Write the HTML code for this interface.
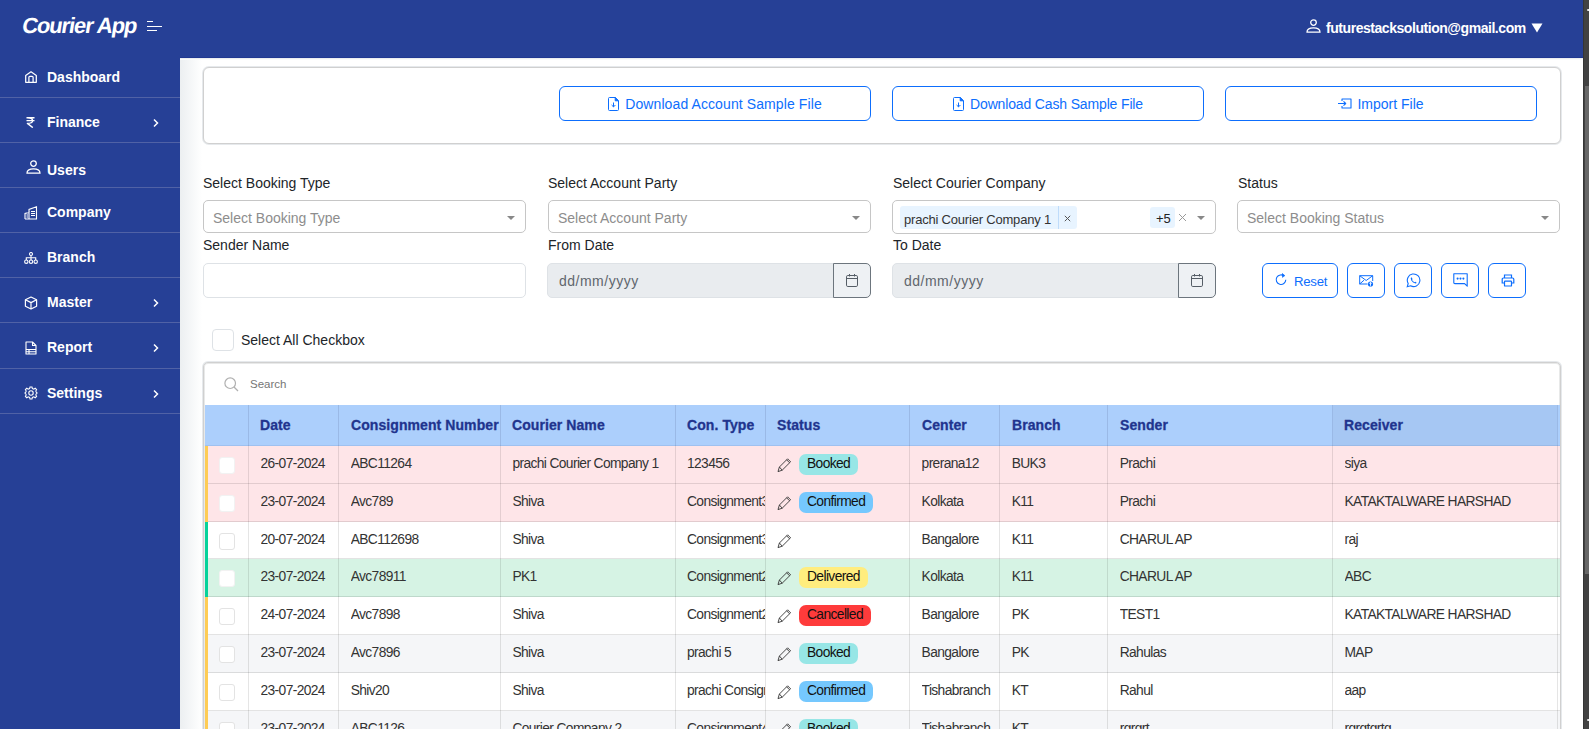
<!DOCTYPE html><html><head><meta charset="utf-8"><style>
*{box-sizing:border-box;margin:0;padding:0}
html,body{width:1589px;height:729px;overflow:hidden;background:#fff;font-family:"Liberation Sans",sans-serif;}
.a{position:absolute}
#hdr{left:0;top:0;width:1583px;height:58px;background:#264096;}
#side{left:0;top:58px;width:180px;height:671px;background:#264096;}
#shade{left:180px;top:58px;width:22px;height:671px;background:linear-gradient(to right,#eceff1,#ffffff);}
#shadetop{left:180px;top:58px;width:1403px;height:2px;background:linear-gradient(to bottom,#e3e6ea,#ffffff);}
.sep{position:absolute;left:0;width:180px;height:1px;background:#5062a6}
.nav{position:absolute;left:47px;color:#fff;font-weight:bold;font-size:14px;line-height:16px;white-space:nowrap}
.ic{position:absolute}
#sb{left:1583px;top:0;width:6px;height:729px;background:#424242;border-left:1px solid #363636}
#thumb{left:1585px;top:86px;width:4px;height:488px;background:#686868}
.card{position:absolute;border:1px solid #d0d0d0;border-radius:6px;background:#fff;box-shadow:0 0 0 1px #e6e9ec}
.btn{position:absolute;border:1px solid #0d6efd;border-radius:6px;color:#0d6efd;font-size:14px;display:flex;align-items:center;justify-content:center;background:#fff;white-space:nowrap}
.lbl{position:absolute;font-size:14px;line-height:16px;color:#212529;white-space:nowrap}
.sel{position:absolute;height:33px;border:1px solid #c6c6c6;border-radius:5px;background:#fff}
.ph{position:absolute;font-size:14px;line-height:16px;color:#8d8d8d;white-space:nowrap}
.arr{position:absolute;width:0;height:0;border-left:4px solid transparent;border-right:4px solid transparent;border-top:4px solid #888}
.inp{position:absolute;height:35px;border:1px solid #dee2e6;border-radius:5px;background:#fff}
.dinp{position:absolute;height:35px;border:1px solid #dee2e6;border-radius:5px 0 0 5px;background:#e9ecef}
.dbtn{position:absolute;height:35px;width:38px;border:1px solid #6c757d;border-radius:0 5px 5px 0;background:#eef1f4}
.dtxt{position:absolute;font-size:14px;line-height:16px;color:#5f666d;letter-spacing:0.5px;white-space:nowrap}
.ibtn{position:absolute;top:263px;height:35px;border:1px solid #0d6efd;border-radius:6px;background:#fff}
.th{position:absolute;top:405px;height:41px;font-weight:bold;font-size:14px;color:#21348e;letter-spacing:0.08px;-webkit-text-stroke:0.3px #21348e;white-space:nowrap}
.row{position:absolute;left:205px;width:1355px;height:38px;border-bottom:1px solid rgba(0,0,0,0.11)}
.cell{position:absolute;font-size:13.8px;letter-spacing:-0.62px;color:#333;white-space:nowrap;overflow:hidden;line-height:16px}
.vd{position:absolute;width:1px;background:rgba(0,0,0,0.1)}
.hvd{position:absolute;width:1px;top:405px;height:41px;background:rgba(0,0,40,0.1)}
.badge{position:absolute;height:21px;border-radius:7px;font-size:13.8px;letter-spacing:-0.6px;color:#111;line-height:19px;padding:0 8px;white-space:nowrap}
.cb{position:absolute;width:16px;height:17px;border-radius:3px;background:#fff}
</style></head><body><div id="hdr" class="a"></div>
<div id="side" class="a"></div>
<div id="shade" class="a"></div>
<div id="shadetop" class="a"></div>
<div class="a" style="left:180px;top:57px;width:1403px;height:1px;background:#1f3790"></div>
<div class="a" style="left:21px;top:14px;font-size:22px;font-weight:bold;color:#fff;letter-spacing:-1.1px;line-height:24px;transform:skewX(-9deg);transform-origin:0 20px">Courier App</div>
<div class="a" style="left:147px;top:21px;width:6px;height:1px;background:#fff"></div><div class="a" style="left:147px;top:26px;width:15px;height:1px;background:#fff"></div><div class="a" style="left:147px;top:30px;width:10px;height:1px;background:#fff"></div>
<svg class="a" style="left:1306px;top:19px" width="15" height="14" viewBox="0 0 15 14" fill="none" stroke="#fff" stroke-width="1.3"><circle cx="7.5" cy="3.6" r="2.8"/><path d="M1 13.2 Q1 8.8 7.5 8.8 Q14 8.8 14 13.2 Z"/></svg>
<div class="a" style="left:1326px;top:20px;font-size:14px;font-weight:bold;color:#fff;line-height:16px;letter-spacing:-0.45px;white-space:nowrap">futurestacksolution@gmail.com</div>
<svg class="a" style="left:1531px;top:23px" width="12" height="10" viewBox="0 0 12 10"><path d="M0.5 0.5H11.5L6 9.5Z" fill="#fff"/></svg>
<div class="sep" style="top:97px"></div>
<div class="sep" style="top:142px"></div>
<div class="sep" style="top:187px"></div>
<div class="sep" style="top:232px"></div>
<div class="sep" style="top:277px"></div>
<div class="sep" style="top:322px"></div>
<div class="sep" style="top:368px"></div>
<div class="sep" style="top:413px"></div>
<div class="nav" style="top:69px">Dashboard</div>
<div class="nav" style="top:114px">Finance</div>
<div class="nav" style="top:161.5px">Users</div>
<div class="nav" style="top:204px">Company</div>
<div class="nav" style="top:249px">Branch</div>
<div class="nav" style="top:294px">Master</div>
<div class="nav" style="top:339px">Report</div>
<div class="nav" style="top:385px">Settings</div>
<svg style="position:absolute;left:152px;top:118px" width="8" height="10" viewBox="0 0 8 10" fill="none" stroke="#fff" stroke-width="1.5"><path d="M2 1.5 L5.5 5 L2 8.5"/></svg>
<svg style="position:absolute;left:152px;top:298px" width="8" height="10" viewBox="0 0 8 10" fill="none" stroke="#fff" stroke-width="1.5"><path d="M2 1.5 L5.5 5 L2 8.5"/></svg>
<svg style="position:absolute;left:152px;top:343px" width="8" height="10" viewBox="0 0 8 10" fill="none" stroke="#fff" stroke-width="1.5"><path d="M2 1.5 L5.5 5 L2 8.5"/></svg>
<svg style="position:absolute;left:152px;top:389px" width="8" height="10" viewBox="0 0 8 10" fill="none" stroke="#fff" stroke-width="1.5"><path d="M2 1.5 L5.5 5 L2 8.5"/></svg>
<div class="ic" style="left:25px;top:71px;line-height:0"><svg width="12" height="12" viewBox="0 0 12 12" fill="none" stroke="#fff" stroke-width="1.25" stroke-linejoin="round"><path d="M0.7 4.4 L6 0.8 L11.3 4.4 V11.3 H0.7 Z"/><path d="M3.9 11.3 V6.2 Q3.9 5.3 4.8 5.3 H7.2 Q8.1 5.3 8.1 6.2 V11.3"/></svg></div>
<svg class="a" style="left:26px;top:117px" width="9" height="11" viewBox="0 0 9 11" fill="none" stroke="#fff" stroke-width="1.4" stroke-linejoin="round"><path d="M0.5 0.8H8.5M0.5 3.6H8.5M1.2 0.8Q6.6 0.8 6.6 3.7Q6.6 6.4 1.4 6.4L6.8 10.6"/></svg>
<svg class="a" style="left:26px;top:160px" width="15" height="14" viewBox="0 0 15 14" fill="none" stroke="#fff" stroke-width="1.3"><circle cx="7.5" cy="3.6" r="2.8"/><path d="M1 13.2 Q1 8.8 7.5 8.8 Q14 8.8 14 13.2 Z"/></svg>
<svg class="a" style="left:24px;top:206px" width="14" height="14" viewBox="0 0 14 14" fill="none" stroke="#fff" stroke-width="1.1"><path d="M1 13V7.5L5 6.5V13M5 13V3.5L12.5 0.8V13H1"/><path d="M7 5.5H11M7 7.5H11M7 9.5H11M2.5 9H4M2.5 11H4"/></svg>
<svg class="a" style="left:24px;top:252px" width="14" height="12" viewBox="0 0 14 12" fill="none" stroke="#fff" stroke-width="1.1"><circle cx="7" cy="2" r="1.5"/><path d="M7 3.5V5.5M2.3 8V5.8H11.7V8M7 5.5V8"/><circle cx="2.3" cy="9.7" r="1.7"/><circle cx="7" cy="9.7" r="1.7"/><circle cx="11.7" cy="9.7" r="1.7"/></svg>
<svg class="a" style="left:24px;top:296px" width="14" height="14" viewBox="0 0 14 14" fill="none" stroke="#fff" stroke-width="1.2" stroke-linejoin="round"><path d="M7 1L12.6 3.8V10.2L7 13L1.4 10.2V3.8Z"/><path d="M1.4 3.8L7 6.6L12.6 3.8M7 6.6V13"/></svg>
<svg class="a" style="left:25px;top:341px" width="12" height="14" viewBox="0 0 12 14" fill="none" stroke="#fff" stroke-width="1.1" stroke-linejoin="round"><path d="M1 1H7.5L11 4.5V13H1Z"/><path d="M7.5 1V4.5H11M1 8.5H11M1 10.8H11M4 8.5V13"/></svg>
<svg class="a" style="left:24px;top:386px" width="14" height="14" viewBox="0 0 14 14" fill="none" stroke="#fff" stroke-width="1.1"><circle cx="7" cy="7" r="2.2"/><path d="M6 1H8L8.4 2.6L9.8 3.2L11.2 2.3L12.6 3.7L11.8 5.1L12.4 6.5L13 6.9V7.1L12.4 7.5L11.8 8.9L12.6 10.3L11.2 11.7L9.8 10.8L8.4 11.4L8 13H6L5.6 11.4L4.2 10.8L2.8 11.7L1.4 10.3L2.2 8.9L1.6 7.5L1 7.1V6.9L1.6 6.5L2.2 5.1L1.4 3.7L2.8 2.3L4.2 3.2L5.6 2.6Z"/></svg>
<div id="sb" class="a"></div><div id="thumb" class="a"></div>
<div class="a" style="left:1587px;top:9px;width:2px;height:2px;background:#e8e8e8;border-radius:1px 0 0 1px"></div><div class="a" style="left:1587px;top:719px;width:2px;height:2px;background:#e8e8e8;border-radius:1px 0 0 1px"></div>
<div class="card" style="left:203px;top:67px;width:1358px;height:77px"></div>
<div class="btn" style="left:559px;top:86px;width:312px;height:35px"><svg width="11" height="14" viewBox="0 0 11 14" fill="none" stroke="#0d6efd" stroke-width="1" stroke-linejoin="round" style="margin-right:6px;flex:none"><path d="M1.5 0.5H7.2L10.5 3.8V12.5Q10.5 13.5 9.5 13.5H1.5Q0.5 13.5 0.5 12.5V1.5Q0.5 0.5 1.5 0.5Z"/><path d="M7.2 0.5V3.8H10.5Z" fill="#0d6efd"/><path d="M5.5 5.5V9.8M3.6 8L5.5 9.9L7.4 8"/></svg><span style="letter-spacing:0.1px">Download Account Sample File</span></div>
<div class="btn" style="left:892px;top:86px;width:312px;height:35px"><svg width="11" height="14" viewBox="0 0 11 14" fill="none" stroke="#0d6efd" stroke-width="1" stroke-linejoin="round" style="margin-right:6px;flex:none"><path d="M1.5 0.5H7.2L10.5 3.8V12.5Q10.5 13.5 9.5 13.5H1.5Q0.5 13.5 0.5 12.5V1.5Q0.5 0.5 1.5 0.5Z"/><path d="M7.2 0.5V3.8H10.5Z" fill="#0d6efd"/><path d="M5.5 5.5V9.8M3.6 8L5.5 9.9L7.4 8"/></svg><span style="letter-spacing:-0.15px">Download Cash Sample File</span></div>
<div class="btn" style="left:1225px;top:86px;width:312px;height:35px"><svg width="14" height="11" viewBox="0 0 14 11" fill="none" stroke="#0d6efd" stroke-width="1.1" stroke-linejoin="round" style="margin-right:5px"><path d="M4 3V1H13V10H4V8M0 5.5H7.5M5.5 3.3L7.7 5.5L5.5 7.7"/></svg><span>Import File</span></div>
<div class="lbl" style="left:203px;top:175px">Select Booking Type</div>
<div class="lbl" style="left:548px;top:175px">Select Account Party</div>
<div class="lbl" style="left:893px;top:175px">Select Courier Company</div>
<div class="lbl" style="left:1238px;top:175px">Status</div>
<div class="lbl" style="left:203px;top:237.4px">Sender Name</div>
<div class="lbl" style="left:548px;top:237.4px">From Date</div>
<div class="lbl" style="left:893px;top:237.4px">To Date</div>
<div class="sel" style="left:203px;top:200px;width:323px"></div>
<div class="ph" style="left:213px;top:210px">Select Booking Type</div>
<div class="arr" style="left:507px;top:216px"></div>
<div class="sel" style="left:548px;top:200px;width:323px"></div>
<div class="ph" style="left:558px;top:210px">Select Account Party</div>
<div class="arr" style="left:852px;top:216px"></div>
<div class="sel" style="left:1237px;top:200px;width:323px"></div>
<div class="ph" style="left:1247px;top:210px">Select Booking Status</div>
<div class="arr" style="left:1541px;top:216px"></div>
<div class="sel" style="left:892px;top:200px;width:324px;height:34px"></div>
<div class="a" style="left:900px;top:206px;width:177px;height:23px;background:#e8f4ff;border-radius:3px"></div>
<div class="a" style="left:1058px;top:206px;width:1px;height:23px;background:#bfdcfb"></div>
<div class="a" style="left:904px;top:212px;font-size:13px;color:#333;line-height:16px;white-space:nowrap;letter-spacing:-0.2px">prachi Courier Company 1</div>
<svg class="a" style="left:1064px;top:215px" width="7" height="7" viewBox="0 0 7 7" stroke="#555" stroke-width="1"><path d="M0.8 0.8L6.2 6.2M6.2 0.8L0.8 6.2"/></svg>
<div class="a" style="left:1150px;top:207px;width:25px;height:21px;background:#e8f4ff;border-radius:3px"></div>
<div class="a" style="left:1156px;top:211px;font-size:13px;color:#222;line-height:16px">+5</div>
<svg class="a" style="left:1178px;top:213px" width="9" height="9" viewBox="0 0 9 9" stroke="#9a9a9a" stroke-width="1"><path d="M1 1L8 8M8 1L1 8"/></svg>
<div class="arr" style="left:1197px;top:216px"></div>
<div class="inp" style="left:203px;top:263px;width:323px"></div>
<div class="dinp" style="left:547px;top:263px;width:287px"></div>
<div class="dtxt" style="left:559px;top:273px">dd/mm/yyyy</div>
<div class="dbtn" style="left:833px;top:263px"></div>
<div class="a" style="left:846px;top:274px;line-height:0"><svg width="12" height="13" viewBox="0 0 12 13" fill="none" stroke="#555d66" stroke-width="1"><rect x="0.5" y="1.5" width="11" height="11" rx="1.3"/><path d="M0.5 4.5H11.5M3.5 0V2.5M8.5 0V2.5"/></svg></div>
<div class="dinp" style="left:892px;top:263px;width:287px"></div>
<div class="dtxt" style="left:904px;top:273px">dd/mm/yyyy</div>
<div class="dbtn" style="left:1178px;top:263px"></div>
<div class="a" style="left:1191px;top:274px;line-height:0"><svg width="12" height="13" viewBox="0 0 12 13" fill="none" stroke="#555d66" stroke-width="1"><rect x="0.5" y="1.5" width="11" height="11" rx="1.3"/><path d="M0.5 4.5H11.5M3.5 0V2.5M8.5 0V2.5"/></svg></div>
<div class="ibtn" style="left:1262px;width:76px"></div>
<svg class="a" style="left:1275px;top:272px" width="12" height="14" viewBox="0 0 12 14" fill="none" stroke="#0d6efd" stroke-width="1.1"><path d="M9.3 4.2 A4.8 4.8 0 1 0 10.8 7.8"/><path d="M7 1.3L9.8 3.6L7.2 5.6" fill="#0d6efd" stroke-width="0.6"/></svg>
<div class="a" style="left:1294px;top:274px;font-size:13.2px;line-height:16px;color:#0d6efd;letter-spacing:-0.25px">Reset</div>
<div class="ibtn" style="left:1347px;width:38px"></div>
<div class="ibtn" style="left:1394px;width:38px"></div>
<div class="ibtn" style="left:1441px;width:38px"></div>
<div class="ibtn" style="left:1488px;width:38px"></div>
<svg class="a" style="left:1359px;top:275px" width="15" height="12" viewBox="0 0 15 12" fill="none" stroke="#0d6efd" stroke-width="1"><path d="M8.5 9H0.7V0.7H13.7V6"/><path d="M0.7 0.7L7.2 5.5L13.7 0.7"/><path d="M0.7 9L5 5.2"/><circle cx="11.5" cy="9" r="2.6" fill="#0d6efd" stroke="none"/><path d="M11.5 10.8V7.5M10.3 8.6L11.5 7.3L12.7 8.6" stroke="#fff" stroke-width="0.9"/></svg>
<svg class="a" style="left:1406px;top:273px" width="15" height="15" viewBox="0 0 15 15" fill="none" stroke="#0d6efd" stroke-width="1.1"><path d="M1.2 13.8L2.2 10.5A6.3 6.3 0 1 1 4.6 12.8Z"/><path d="M5 4.6Q4.3 5.3 5.3 7.6Q6.8 10 9.6 10.6Q10.6 10.4 10.5 9.6L9.3 8.8L8.5 9.3Q7 8.5 6 7L6.6 6.2L5.8 4.5Z" fill="#0d6efd" stroke="none"/></svg>
<svg class="a" style="left:1453px;top:273px" width="15" height="14" viewBox="0 0 15 14" fill="none" stroke="#0d6efd" stroke-width="1.1" stroke-linejoin="round"><path d="M0.8 0.8H14.2V13.2L11.6 10.6H2Q0.8 10.6 0.8 9.4Z"/><circle cx="4.6" cy="5.6" r="0.5" fill="#0d6efd"/><circle cx="7.5" cy="5.6" r="0.5" fill="#0d6efd"/><circle cx="10.4" cy="5.6" r="0.5" fill="#0d6efd"/></svg>
<svg class="a" style="left:1501px;top:274px" width="14" height="13" viewBox="0 0 14 13" fill="none" stroke="#0d6efd" stroke-width="1.2"><path d="M3.5 4V1H10.5V4"/><path d="M3.5 9H1.2V5.2Q1.2 4 2.4 4H11.6Q12.8 4 12.8 5.2V9H10.5"/><rect x="3.5" y="7.2" width="7" height="4.8" rx="0.6"/></svg>
<div class="a" style="left:212px;top:329px;width:22px;height:22px;border:1px solid #dee2e6;border-radius:4px;background:#fff"></div>
<div class="lbl" style="left:241px;top:332px">Select All Checkbox</div>
<div class="a" style="left:203px;top:362px;width:1358px;height:400px;border:1px solid #d0d0d0;border-radius:5px;background:#fff;box-shadow:0 0 0 1px #e6e9ec, inset 0 0 0 1px #e8e9e9"></div>
<svg class="a" style="left:224px;top:377px" width="15" height="15" viewBox="0 0 15 15" fill="none" stroke="#b0b0b0" stroke-width="1.2"><circle cx="6.2" cy="6.2" r="5.3"/><path d="M10 10L14 14"/></svg>
<div class="a" style="left:250px;top:377px;font-size:11.5px;color:#767676;line-height:14px">Search</div>
<div class="a" style="left:205px;top:405px;width:1355px;height:41px;background:#accffc"></div>
<div class="a" style="left:1333px;top:405px;width:224px;height:41px;background:#a6c7f3"></div>
<div class="a" style="left:205px;top:445px;width:1355px;height:1px;background:rgba(0,20,80,0.07)"></div>
<div class="th" style="left:260px;line-height:41px">Date</div>
<div class="th" style="left:351px;line-height:41px">Consignment Number</div>
<div class="th" style="left:512px;line-height:41px">Courier Name</div>
<div class="th" style="left:687px;line-height:41px">Con. Type</div>
<div class="th" style="left:777px;line-height:41px">Status</div>
<div class="th" style="left:922px;line-height:41px">Center</div>
<div class="th" style="left:1012px;line-height:41px">Branch</div>
<div class="th" style="left:1120px;line-height:41px">Sender</div>
<div class="th" style="left:1344px;line-height:41px">Receiver</div>
<div class="row" style="top:446.00px;height:38.00px;background:#fee5e8"></div>
<div class="a" style="left:205px;top:446.00px;width:3px;height:38.00px;background:#fecc55"></div>
<div class="cb" style="left:219px;top:457.30px;border:1px solid #f2f2f2"></div>
<div class="cell" style="left:260.5px;top:455.70px;width:78.2px">26-07-2024</div>
<div class="cell" style="left:350.7px;top:455.70px;width:149.7px">ABC11264</div>
<div class="cell" style="left:512.4px;top:455.70px;width:162.6px">prachi Courier Company 1</div>
<div class="cell" style="left:687.0px;top:455.70px;width:78.3px">123456</div>
<div class="a" style="left:777px;top:457.70px;line-height:0"><svg width="15" height="15" viewBox="0 0 15 15" fill="none" stroke="#333" stroke-width="0.9" stroke-linejoin="round"><path d="M10.6 0.8L13.6 3.8L5.2 12.2L1 13.6L2.4 9Z"/><path d="M2.4 9L5.2 12.2M9.6 1.8L12.6 4.8"/></svg></div>
<div class="badge" style="left:799px;top:454.00px;width:59px;background:#97e6e6">Booked</div>
<div class="cell" style="left:921.6px;top:455.70px;width:78.1px">prerana12</div>
<div class="cell" style="left:1011.7px;top:455.70px;width:96.0px">BUK3</div>
<div class="cell" style="left:1119.7px;top:455.70px;width:212.8px">Prachi</div>
<div class="cell" style="left:1344.5px;top:455.70px;width:212.5px">siya</div>
<div class="row" style="top:484.00px;height:38.00px;background:#fee5e8"></div>
<div class="a" style="left:205px;top:484.00px;width:3px;height:38.00px;background:#fecc55"></div>
<div class="cb" style="left:219px;top:495.30px;border:1px solid #f2f2f2"></div>
<div class="cell" style="left:260.5px;top:493.70px;width:78.2px">23-07-2024</div>
<div class="cell" style="left:350.7px;top:493.70px;width:149.7px">Avc789</div>
<div class="cell" style="left:512.4px;top:493.70px;width:162.6px">Shiva</div>
<div class="cell" style="left:687.0px;top:493.70px;width:78.3px">Consignment3</div>
<div class="a" style="left:777px;top:495.70px;line-height:0"><svg width="15" height="15" viewBox="0 0 15 15" fill="none" stroke="#333" stroke-width="0.9" stroke-linejoin="round"><path d="M10.6 0.8L13.6 3.8L5.2 12.2L1 13.6L2.4 9Z"/><path d="M2.4 9L5.2 12.2M9.6 1.8L12.6 4.8"/></svg></div>
<div class="badge" style="left:799px;top:492.00px;width:74px;background:#75c8fe">Confirmed</div>
<div class="cell" style="left:921.6px;top:493.70px;width:78.1px">Kolkata</div>
<div class="cell" style="left:1011.7px;top:493.70px;width:96.0px">K11</div>
<div class="cell" style="left:1119.7px;top:493.70px;width:212.8px">Prachi</div>
<div class="cell" style="left:1344.5px;top:493.70px;width:212.5px">KATAKTALWARE HARSHAD</div>
<div class="row" style="top:522.00px;height:37.00px;background:#ffffff"></div>
<div class="a" style="left:205px;top:522.00px;width:3px;height:37.00px;background:#06d29b"></div>
<div class="cb" style="left:219px;top:533.30px;border:1px solid #e3e3e3"></div>
<div class="cell" style="left:260.5px;top:531.70px;width:78.2px">20-07-2024</div>
<div class="cell" style="left:350.7px;top:531.70px;width:149.7px">ABC112698</div>
<div class="cell" style="left:512.4px;top:531.70px;width:162.6px">Shiva</div>
<div class="cell" style="left:687.0px;top:531.70px;width:78.3px">Consignment3</div>
<div class="a" style="left:777px;top:533.70px;line-height:0"><svg width="15" height="15" viewBox="0 0 15 15" fill="none" stroke="#333" stroke-width="0.9" stroke-linejoin="round"><path d="M10.6 0.8L13.6 3.8L5.2 12.2L1 13.6L2.4 9Z"/><path d="M2.4 9L5.2 12.2M9.6 1.8L12.6 4.8"/></svg></div>
<div class="cell" style="left:921.6px;top:531.70px;width:78.1px">Bangalore</div>
<div class="cell" style="left:1011.7px;top:531.70px;width:96.0px">K11</div>
<div class="cell" style="left:1119.7px;top:531.70px;width:212.8px">CHARUL AP</div>
<div class="cell" style="left:1344.5px;top:531.70px;width:212.5px">raj</div>
<div class="row" style="top:559.00px;height:38.00px;background:#d6f3e4"></div>
<div class="a" style="left:205px;top:559.00px;width:3px;height:38.00px;background:#06d29b"></div>
<div class="cb" style="left:219px;top:570.30px;border:1px solid #f2f2f2"></div>
<div class="cell" style="left:260.5px;top:568.70px;width:78.2px">23-07-2024</div>
<div class="cell" style="left:350.7px;top:568.70px;width:149.7px">Avc78911</div>
<div class="cell" style="left:512.4px;top:568.70px;width:162.6px">PK1</div>
<div class="cell" style="left:687.0px;top:568.70px;width:78.3px">Consignment2</div>
<div class="a" style="left:777px;top:570.70px;line-height:0"><svg width="15" height="15" viewBox="0 0 15 15" fill="none" stroke="#333" stroke-width="0.9" stroke-linejoin="round"><path d="M10.6 0.8L13.6 3.8L5.2 12.2L1 13.6L2.4 9Z"/><path d="M2.4 9L5.2 12.2M9.6 1.8L12.6 4.8"/></svg></div>
<div class="badge" style="left:799px;top:567.00px;width:69px;background:#ffed7e">Delivered</div>
<div class="cell" style="left:921.6px;top:568.70px;width:78.1px">Kolkata</div>
<div class="cell" style="left:1011.7px;top:568.70px;width:96.0px">K11</div>
<div class="cell" style="left:1119.7px;top:568.70px;width:212.8px">CHARUL AP</div>
<div class="cell" style="left:1344.5px;top:568.70px;width:212.5px">ABC</div>
<div class="row" style="top:597.00px;height:38.00px;background:#ffffff"></div>
<div class="a" style="left:205px;top:597.00px;width:3px;height:38.00px;background:#fecc55"></div>
<div class="cb" style="left:219px;top:608.30px;border:1px solid #e3e3e3"></div>
<div class="cell" style="left:260.5px;top:606.70px;width:78.2px">24-07-2024</div>
<div class="cell" style="left:350.7px;top:606.70px;width:149.7px">Avc7898</div>
<div class="cell" style="left:512.4px;top:606.70px;width:162.6px">Shiva</div>
<div class="cell" style="left:687.0px;top:606.70px;width:78.3px">Consignment2</div>
<div class="a" style="left:777px;top:608.70px;line-height:0"><svg width="15" height="15" viewBox="0 0 15 15" fill="none" stroke="#333" stroke-width="0.9" stroke-linejoin="round"><path d="M10.6 0.8L13.6 3.8L5.2 12.2L1 13.6L2.4 9Z"/><path d="M2.4 9L5.2 12.2M9.6 1.8L12.6 4.8"/></svg></div>
<div class="badge" style="left:799px;top:605.00px;width:72px;background:#fe3b3b">Cancelled</div>
<div class="cell" style="left:921.6px;top:606.70px;width:78.1px">Bangalore</div>
<div class="cell" style="left:1011.7px;top:606.70px;width:96.0px">PK</div>
<div class="cell" style="left:1119.7px;top:606.70px;width:212.8px">TEST1</div>
<div class="cell" style="left:1344.5px;top:606.70px;width:212.5px">KATAKTALWARE HARSHAD</div>
<div class="row" style="top:635.00px;height:38.00px;background:#f5f6f8"></div>
<div class="a" style="left:205px;top:635.00px;width:3px;height:38.00px;background:#fecc55"></div>
<div class="cb" style="left:219px;top:646.30px;border:1px solid #e3e3e3"></div>
<div class="cell" style="left:260.5px;top:644.70px;width:78.2px">23-07-2024</div>
<div class="cell" style="left:350.7px;top:644.70px;width:149.7px">Avc7896</div>
<div class="cell" style="left:512.4px;top:644.70px;width:162.6px">Shiva</div>
<div class="cell" style="left:687.0px;top:644.70px;width:78.3px">prachi 5</div>
<div class="a" style="left:777px;top:646.70px;line-height:0"><svg width="15" height="15" viewBox="0 0 15 15" fill="none" stroke="#333" stroke-width="0.9" stroke-linejoin="round"><path d="M10.6 0.8L13.6 3.8L5.2 12.2L1 13.6L2.4 9Z"/><path d="M2.4 9L5.2 12.2M9.6 1.8L12.6 4.8"/></svg></div>
<div class="badge" style="left:799px;top:643.00px;width:59px;background:#97e6e6">Booked</div>
<div class="cell" style="left:921.6px;top:644.70px;width:78.1px">Bangalore</div>
<div class="cell" style="left:1011.7px;top:644.70px;width:96.0px">PK</div>
<div class="cell" style="left:1119.7px;top:644.70px;width:212.8px">Rahulas</div>
<div class="cell" style="left:1344.5px;top:644.70px;width:212.5px">MAP</div>
<div class="row" style="top:673.00px;height:38.00px;background:#ffffff"></div>
<div class="a" style="left:205px;top:673.00px;width:3px;height:38.00px;background:#fecc55"></div>
<div class="cb" style="left:219px;top:684.30px;border:1px solid #e3e3e3"></div>
<div class="cell" style="left:260.5px;top:682.70px;width:78.2px">23-07-2024</div>
<div class="cell" style="left:350.7px;top:682.70px;width:149.7px">Shiv20</div>
<div class="cell" style="left:512.4px;top:682.70px;width:162.6px">Shiva</div>
<div class="cell" style="left:687.0px;top:682.70px;width:78.3px">prachi Consignment</div>
<div class="a" style="left:777px;top:684.70px;line-height:0"><svg width="15" height="15" viewBox="0 0 15 15" fill="none" stroke="#333" stroke-width="0.9" stroke-linejoin="round"><path d="M10.6 0.8L13.6 3.8L5.2 12.2L1 13.6L2.4 9Z"/><path d="M2.4 9L5.2 12.2M9.6 1.8L12.6 4.8"/></svg></div>
<div class="badge" style="left:799px;top:681.00px;width:74px;background:#75c8fe">Confirmed</div>
<div class="cell" style="left:921.6px;top:682.70px;width:78.1px">Tishabranch</div>
<div class="cell" style="left:1011.7px;top:682.70px;width:96.0px">KT</div>
<div class="cell" style="left:1119.7px;top:682.70px;width:212.8px">Rahul</div>
<div class="cell" style="left:1344.5px;top:682.70px;width:212.5px">aap</div>
<div class="row" style="top:711.00px;height:38.00px;background:#f5f6f8"></div>
<div class="a" style="left:205px;top:711.00px;width:3px;height:38.00px;background:#fecc55"></div>
<div class="cb" style="left:219px;top:722.30px;border:1px solid #e3e3e3"></div>
<div class="cell" style="left:260.5px;top:720.70px;width:78.2px">23-07-2024</div>
<div class="cell" style="left:350.7px;top:720.70px;width:149.7px">ABC1126</div>
<div class="cell" style="left:512.4px;top:720.70px;width:162.6px">Courier Company 2</div>
<div class="cell" style="left:687.0px;top:720.70px;width:78.3px">Consignment4</div>
<div class="a" style="left:777px;top:722.70px;line-height:0"><svg width="15" height="15" viewBox="0 0 15 15" fill="none" stroke="#333" stroke-width="0.9" stroke-linejoin="round"><path d="M10.6 0.8L13.6 3.8L5.2 12.2L1 13.6L2.4 9Z"/><path d="M2.4 9L5.2 12.2M9.6 1.8L12.6 4.8"/></svg></div>
<div class="badge" style="left:799px;top:719.00px;width:59px;background:#97e6e6">Booked</div>
<div class="cell" style="left:921.6px;top:720.70px;width:78.1px">Tishabranch</div>
<div class="cell" style="left:1011.7px;top:720.70px;width:96.0px">KT</div>
<div class="cell" style="left:1119.7px;top:720.70px;width:212.8px">rgrgrt</div>
<div class="cell" style="left:1344.5px;top:720.70px;width:212.5px">rgrgtgrtg</div>
<div class="hvd" style="left:248px"></div>
<div class="vd" style="left:248px;top:446px;height:283px"></div>
<div class="hvd" style="left:338px"></div>
<div class="vd" style="left:338px;top:446px;height:283px"></div>
<div class="hvd" style="left:500px"></div>
<div class="vd" style="left:500px;top:446px;height:283px"></div>
<div class="hvd" style="left:675px"></div>
<div class="vd" style="left:675px;top:446px;height:283px"></div>
<div class="hvd" style="left:765px"></div>
<div class="vd" style="left:765px;top:446px;height:283px"></div>
<div class="hvd" style="left:909px"></div>
<div class="vd" style="left:909px;top:446px;height:283px"></div>
<div class="hvd" style="left:999px"></div>
<div class="vd" style="left:999px;top:446px;height:283px"></div>
<div class="hvd" style="left:1107px"></div>
<div class="vd" style="left:1107px;top:446px;height:283px"></div>
<div class="hvd" style="left:1332px"></div>
<div class="vd" style="left:1332px;top:446px;height:283px"></div>
<div class="hvd" style="left:1557px"></div>
<div class="vd" style="left:1557px;top:446px;height:283px"></div></body></html>
